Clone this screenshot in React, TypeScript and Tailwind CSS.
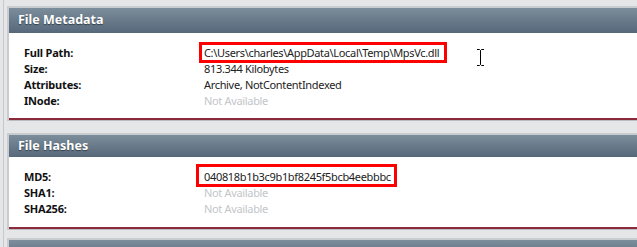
import React from "react";

const font = { fontFamily: '"Noto Sans", "Open Sans", Arial, sans-serif' };

function Row({ label, value, muted }: { label: string; value: string; muted?: boolean }) {
  return (
    <div className="flex h-[16px] items-center leading-[16px]">
      <div className="w-[180px] shrink-0 font-bold tracking-[-0.2px] text-[#111]">{label}</div>
      <div className={`tracking-[-0.33px] ${muted ? "text-[#c3c6c9]" : "text-[#222]"}`}>{value}</div>
    </div>
  );
}

function Panel({
  title,
  children,
  headerH,
  bodyCls,
}: {
  title: string;
  children?: React.ReactNode;
  headerH: string;
  bodyCls: string;
}) {
  return (
    <div className="w-[640px] border-t-2 border-t-[#c9cccf] border-l-2 border-l-[#c9cccf] bg-white">
      <div
        className={`${headerH} flex items-center bg-gradient-to-b from-[#7c8d9b] to-[#56687a] pl-[9px] text-[12.5px] font-bold text-white [text-shadow:0_1px_1px_rgba(0,0,0,0.45)]`}
      >
        {title}
      </div>
      <div className={bodyCls}>{children}</div>
      <div className="h-[2px] bg-[#8a2a3b]" />
      <div className="h-[1px] bg-[#b9bcc0]" />
    </div>
  );
}

export default function App() {
  return (
    <div className="relative h-[247px] w-[637px] overflow-hidden bg-[#e4e6e7] text-[11px]" style={font}>
      <div className="absolute left-[3px] top-0 h-full w-[1px] bg-[#c6c9cc]" />
      <div className="flex flex-col pl-[7px] pt-[6px]">
        <Panel title="File Metadata" headerH="h-[25px]" bodyCls="pl-[15px] pt-[12px] pb-[9px]">
          <Row label="Full Path:" value="C:\Users\charles\AppData\Local\Temp\MpsVc.dll" />
          <Row label="Size:" value="813.344 Kilobytes" />
          <Row label="Attributes:" value="Archive, NotContentIndexed" />
          <Row label="INode:" value="Not Available" muted />
        </Panel>
        <div className="h-[12px]" />
        <Panel title="File Hashes" headerH="h-[22px]" bodyCls="pl-[15px] pt-[12px] pb-[10px]">
          <Row label="MD5:" value="040818b1b3c9b1bf8245f5bcb4eebbbc" />
          <Row label="SHA1:" value="Not Available" muted />
          <Row label="SHA256:" value="Not Available" muted />
        </Panel>
        <div className="h-[8px]" />
        <Panel title="" headerH="h-[22px]" bodyCls="h-[20px]" />
      </div>
      {/* red annotation boxes */}
      <div className="absolute left-[199px] top-[42px] h-[21px] w-[248px] border-[3px] border-[#ff0000]" />
      <div className="absolute left-[196px] top-[164px] h-[23px] w-[201px] border-[3px] border-[#ff0000]" />
      {/* I-beam cursor */}
      <svg className="absolute left-[476px] top-[49px]" width="9" height="17" viewBox="0 0 9 17">
        <path d="M1 0.5h2.5l1 1 1-1H8M4.5 1.5v14M1 16.5h2.5l1-1 1 1H8" stroke="#000" strokeWidth="1" fill="none" />
      </svg>
    </div>
  );
}
